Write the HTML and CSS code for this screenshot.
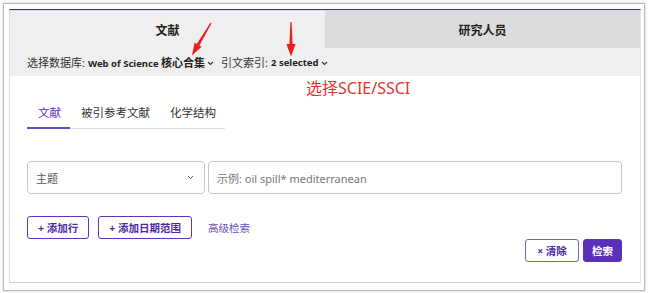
FILE: index.html
```html
<!DOCTYPE html>
<html lang="zh-CN">
<head>
    <meta charset="UTF-8">
    <meta name="viewport" content="width=device-width, initial-scale=1.0">
    <title>Web of Science 检索</title>
    <link rel="stylesheet" href="styles.css">
</head>
<body>
    <div class="frame">
        <div class="card">
            <!-- Onglets principaux -->
            <div class="db-tabs">
                <div class="db-tab active">文献</div>
                <div class="db-tab">研究人员</div>
            </div>
            <div class="db-row">
                <span class="label">选择数据库:</span>
                <span class="value">Web of Science <span class="cjk-bold">核心合集</span></span>
                <svg class="chev" width="7" height="5" viewBox="0 0 7 5"><path d="M1 1l2.5 2.5L6 1" fill="none" stroke="#333" stroke-width="1.1"/></svg>
                <span class="label second">引文索引:</span>
                <span class="value">2 selected</span>
                <svg class="chev" width="7" height="5" viewBox="0 0 7 5"><path d="M1 1l2.5 2.5L6 1" fill="none" stroke="#333" stroke-width="1.1"/></svg>
            </div>

            <div class="content">
                <div class="search-tabs">
                    <div class="tab active">文献</div>
                    <div class="tab">被引参考文献</div>
                    <div class="tab">化学结构</div>
                </div>

                <div class="query-row">
                    <div class="field-select">
                        <span>主题</span>
                        <svg width="7" height="5" viewBox="0 0 7 5"><path d="M1 1l2.5 2.5L6 1" fill="none" stroke="#666" stroke-width="1"/></svg>
                    </div>
                    <div class="field-input">示例: oil spill* mediterranean</div>
                </div>

                <div class="add-row">
                    <button class="btn-outline">+ 添加行</button>
                    <button class="btn-outline">+ 添加日期范围</button>
                    <a class="link" href="#">高级检索</a>
                </div>

                <div class="actions">
                    <button class="btn-outline clear">× 清除</button>
                    <button class="btn-primary">检索</button>
                </div>
            </div>
        </div>
    </div>

    <!-- Annotations -->
    <div class="note">选择SCIE/SSCI</div>
    <svg class="arrows" width="648" height="293" viewBox="0 0 648 293">
        <polygon points="211.6,23.3 199.4,45.5 201.6,46.8 192,55.5 194.6,42.6 196.8,44.1 210.4,22.7" fill="#ec1f1f"/>
        <polygon points="290.4,22 291.6,22 292.6,44 295.6,44 291,56.5 286.4,44 289.4,44" fill="#ec1f1f"/>
    </svg>
</body>
</html>
```

FILE: styles.css
```css
body {
    margin: 0;
    font-family: "Noto Sans", "Noto Sans CJK SC", sans-serif;
    background-color: #fff;
    color: #333;
}
.frame {
    box-sizing: border-box;
    width: 642px;
    height: 288px;
    margin: 3px;
    padding: 5px 3px 7px 5px;
    border: 1px solid #b9b9b9;
    box-shadow: 0 0 3px rgba(0, 0, 0, 0.2);
}
.card {
    box-sizing: border-box;
    height: 100%;
    border-top: 1px solid #3e3358;
    border-left: 1px solid #dedede;
    border-right: 1px solid #e6e6e6;
    border-bottom: 1px solid #cbcbcb;
}
.db-tabs {
    display: flex;
    height: 37px;
    border-top: 1px solid #ddd6ee;
}
.db-tab {
    flex: 1;
    display: flex;
    align-items: center;
    justify-content: center;
    font-size: 12px;
    font-weight: bold;
    color: #222;
    background-color: #dcdcdc;
}
.db-tab.active {
    background-color: #efefef;
}
.db-row {
    display: flex;
    align-items: center;
    height: 28px;
    padding-left: 17px;
    background-color: #efefef;
    font-size: 11px;
    color: #333;
}
.db-row .value {
    margin-left: 3px;
    font-weight: bold;
    font-size: 9.5px;
    color: #222;
}
.db-row .cjk-bold {
    font-size: 11px;
}
.db-row .second {
    margin-left: 7px;
}
.chev {
    margin-left: 2px;
    margin-top: 2px;
}
.content {
    padding: 0 18px 0 17px;
}
.search-tabs {
    display: inline-flex;
    margin-top: 24px;
    border-bottom: 1px solid #ddd;
}
.tab {
    height: 27px;
    line-height: 25px;
    padding: 0 9px 0 11px;
    font-size: 11.5px;
    color: #333;
}
.tab.active {
    color: #5e33bf;
    border-bottom: 2px solid #6a4bc4;
    margin-bottom: -1px;
}
.query-row {
    display: flex;
    gap: 3px;
    margin-top: 32px;
}
.field-select,
.field-input {
    box-sizing: border-box;
    height: 33px;
    display: flex;
    align-items: center;
    border: 1px solid #c6c6c6;
    border-radius: 4px;
    font-size: 11px;
}
.field-select {
    width: 178px;
    justify-content: space-between;
    padding: 0 10px 0 8px;
    color: #555;
}
.field-input {
    flex: 1;
    padding-left: 8px;
    color: #777;
}
.add-row {
    display: flex;
    align-items: center;
    gap: 9px;
    margin-top: 22px;
}
.btn-outline,
.btn-primary {
    box-sizing: border-box;
    height: 23px;
    padding: 0 10px;
    border: 1px solid #5e33bf;
    border-radius: 3px;
    background-color: #fff;
    color: #4e2aa8;
    font-family: inherit;
    font-size: 10.5px;
    font-weight: bold;
    white-space: nowrap;
}
.link {
    margin-left: 7px;
    font-size: 10.5px;
    color: #6650bd;
    text-decoration: none;
}
.actions {
    display: flex;
    justify-content: flex-end;
    gap: 4px;
    margin-top: 0;
}
.clear {
    width: 54px;
    padding: 0;
    border-color: #7a63c4;
}
.btn-primary {
    width: 39px;
    padding: 0;
    background-color: #5b2fb8;
    color: #fff;
}
.note {
    position: absolute;
    left: 306px;
    top: 75px;
    font-size: 16px;
    color: #e3332e;
    font-family: "Noto Sans", "Noto Sans CJK SC", sans-serif;
}
.arrows {
    position: absolute;
    left: 0;
    top: 0;
    pointer-events: none;
}
```
